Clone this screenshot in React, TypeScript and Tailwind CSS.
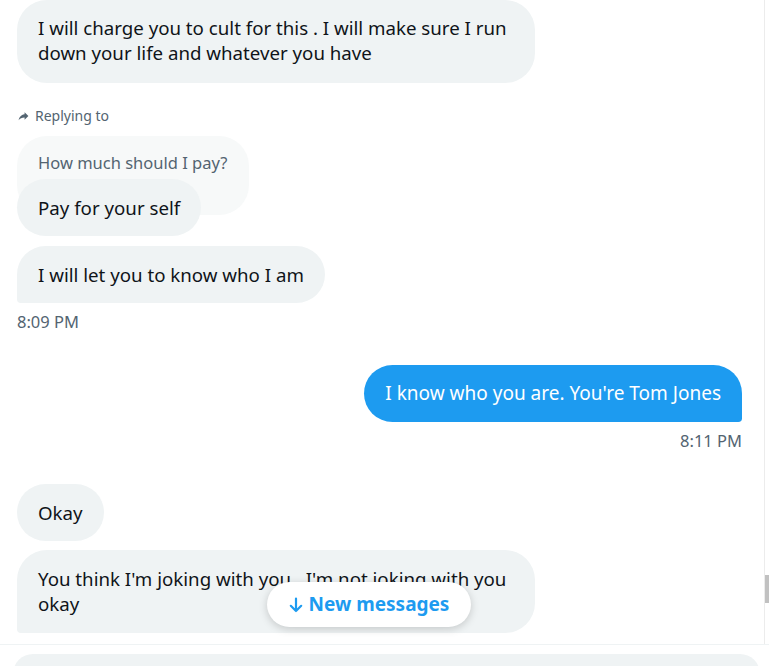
import React from 'react';

const font = { fontFamily: '"Segoe UI", "Noto Sans", "Open Sans", Arial, sans-serif' };

function ReplyIcon() {
  return (
    <svg viewBox="0 0 24 24" className="h-[13px] w-[13px] fill-[#536471]">
      <path d="M14 8V4l7 7-7 7v-4.1c-5 0-8.5 1.6-11 5.1 1-5 4-10 11-11z" />
    </svg>
  );
}

function DownArrow() {
  return (
    <svg viewBox="0 0 14 16" className="h-[16px] w-[14px]" fill="none" stroke="#1d9bf0" strokeWidth="2.2" strokeLinecap="round" strokeLinejoin="round">
      <path d="M7 1.5v12.5M1.8 8.8L7 14l5.2-5.2" />
    </svg>
  );
}

export default function App() {
  return (
    <div className="flex h-[666px] w-[769px] flex-col overflow-hidden bg-white text-[#0f1419]" style={font}>
      <div className="relative flex h-[644px] shrink-0">
        <div className="flex flex-1 flex-col pl-[17px] pr-[22px]">
          {/* first message, scrolled partly off the top */}
          <div className="w-[518px] whitespace-nowrap rounded-[30px] bg-[#eff3f4] px-[21px] pb-[18px] pt-[15px] text-[18.7px] leading-[25px]">
            I will charge you to cult for this . I will make sure I run
            <br />
            down your life and whatever you have
          </div>

          <div className="mt-[23px] flex items-center gap-[5px] text-[14px] leading-[20px] text-[#536471]">
            <ReplyIcon />
            <span>Replying to</span>
          </div>

          <div className="mt-[10px] flex flex-col items-start">
            <div className="w-[232px] rounded-[30px] bg-[#f7f9f9] px-[21px] pb-[40px] pt-[15px] text-[16.5px] leading-[24px] text-[#536471]">
              How much should I pay?
            </div>
            <div className="mt-[-36px] rounded-[30px] bg-[#eff3f4] px-[21px] py-[16px] text-[18.7px] leading-[25px]">
              Pay for your self
            </div>
          </div>

          <div className="mt-[10px] w-fit rounded-[30px] rounded-bl-[4px] bg-[#eff3f4] px-[21px] py-[16px] text-[18.7px] leading-[25px]">
            I will let you to know who I am
          </div>
          <div className="mt-[9px] text-[16.5px] leading-[20px] text-[#536471]">8:09 PM</div>

          <div className="mt-[33px] flex justify-end">
            <div className="whitespace-nowrap rounded-[30px] rounded-br-[4px] bg-[#1d9bf0] px-[21px] py-[16px] text-[19px] leading-[25px] text-white">
              I know who you are. You're Tom Jones
            </div>
          </div>
          <div className="mt-[9px] text-right text-[16.5px] leading-[20px] text-[#536471]">8:11 PM</div>

          <div className="mt-[33px] w-fit rounded-[30px] bg-[#eff3f4] px-[21px] py-[16px] text-[18.7px] leading-[25px]">
            Okay
          </div>
          <div className="mt-[9px] w-[518px] whitespace-nowrap rounded-[30px] rounded-bl-[4px] bg-[#eff3f4] px-[21px] pb-[17px] pt-[16px] text-[18.7px] leading-[25px]">
            You think I'm joking with you . I'm not joking with you
            <br />
            okay
          </div>
        </div>

        <div className="relative w-[5px] border-l border-[#ececec]">
          <div className="absolute left-0 top-[575px] h-[28px] w-[4px] bg-[#c1c1c1]" />
        </div>

        <button className="absolute left-[267px] top-[582px] flex h-[45px] w-[204px] items-center justify-center gap-[6px] rounded-full bg-white text-[19px] font-bold text-[#1d9bf0] shadow-[0_2px_8px_rgba(0,0,0,0.18)]">
          <DownArrow />
          <span>New messages</span>
        </button>
      </div>

      <div className="border-t border-[#eff3f4] px-[13px] pt-[9px]">
        <div className="h-[40px] w-[747px] rounded-[24px] bg-[#eff3f4]" />
      </div>
    </div>
  );
}
